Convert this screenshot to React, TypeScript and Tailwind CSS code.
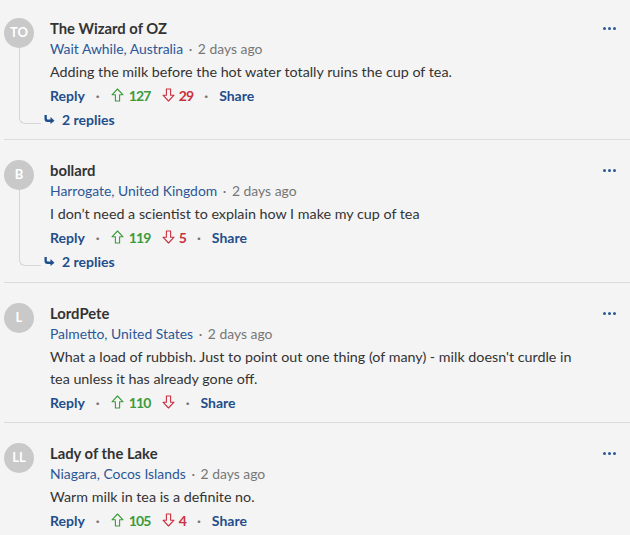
import React from "react";

type Comment = {
  initials: string;
  name: string;
  location: string;
  time: string;
  body: string;
  up: number;
  down?: number;
  replies?: number;
};

const comments: Comment[] = [
  {
    initials: "TO",
    name: "The Wizard of OZ",
    location: "Wait Awhile, Australia",
    time: "2 days ago",
    body: "Adding the milk before the hot water totally ruins the cup of tea.",
    up: 127,
    down: 29,
    replies: 2,
  },
  {
    initials: "B",
    name: "bollard",
    location: "Harrogate, United Kingdom",
    time: "2 days ago",
    body: "I don\u2019t need a scientist to explain how I make my cup of tea",
    up: 119,
    down: 5,
    replies: 2,
  },
  {
    initials: "L",
    name: "LordPete",
    location: "Palmetto, United States",
    time: "2 days ago",
    body: "What a load of rubbish. Just to point out one thing (of many) - milk doesn't curdle in tea unless it has already gone off.",
    up: 110,
  },
  {
    initials: "LL",
    name: "Lady of the Lake",
    location: "Niagara, Cocos Islands",
    time: "2 days ago",
    body: "Warm milk in tea is a definite no.",
    up: 105,
    down: 4,
  },
];

const UpArrow = () => (
  <svg width="13" height="14" viewBox="0 0 13 14" fill="none">
    <path
      d="M6.5 1 L12 6.8 H8.6 V13 H4.4 V6.8 H1 Z"
      stroke="#3b9b3b"
      strokeWidth="1.1"
      strokeLinejoin="round"
    />
  </svg>
);

const DownArrow = () => (
  <svg width="13" height="14" viewBox="0 0 13 14" fill="none">
    <path
      d="M6.5 13 L12 7.2 H8.6 V1 H4.4 V7.2 H1 Z"
      stroke="#c9303e"
      strokeWidth="1.1"
      strokeLinejoin="round"
    />
  </svg>
);

const ReplyArrow = () => (
  <svg width="11" height="9" viewBox="0 0 11 9" fill="#1f4e8c">
    <path d="M0.5 0 H2.8 V3.6 Q2.8 4.6 3.8 4.6 H6.5 V2 L10.5 5.8 L6.5 9 V6.9 H3.4 Q0.5 6.9 0.5 4 Z" />
  </svg>
);

const Dot = () => <span className="px-[11px] text-[14px] text-[#777]">·</span>;

const CommentItem = ({ c, first }: { c: Comment; first: boolean }) => (
  <div
    className={`flex border-b border-[#dcdcdc] ${first ? "pt-[18px]" : "pt-5"} ${
      c.replies ? (first ? "pb-[10px]" : "pb-[11px]") : "pb-2"
    }`}
  >
    <div className="flex w-[30px] shrink-0 flex-col">
      <div className="flex h-[30px] w-[30px] items-center justify-center rounded-full bg-[#c9c9c9] text-[13px] font-bold text-white">
        {c.initials}
      </div>
      {c.replies ? (
        <div className="mb-[5px] ml-[15px] w-[22px] flex-1 rounded-bl-[6px] border-b border-l border-[#d6d6d6]" />
      ) : null}
    </div>
    <div className="ml-4 min-w-0 flex-1">
      <div className="flex h-5 items-center justify-between">
        <span className="text-[14.8px] font-bold text-[#333]">{c.name}</span>
        <span className="mr-[14px] flex gap-[2px]">
          <span className="h-[3px] w-[3px] rounded-full bg-[#2b5797]" />
          <span className="h-[3px] w-[3px] rounded-full bg-[#2b5797]" />
          <span className="h-[3px] w-[3px] rounded-full bg-[#2b5797]" />
        </span>
      </div>
      <div className="mt-px text-[13.9px] leading-5">
        <span className="text-[#2b5797]">{c.location}</span>
        <span className="text-[#777]">
          {" "}
          <span className="px-[2px]">·</span> {c.time}
        </span>
      </div>
      <p className="mt-[2px] pr-[46px] text-[14.3px] leading-[22px] text-[#333]">{c.body}</p>
      <div className="flex h-6 items-center text-[14px] font-bold">
        <span className="text-[#1f4e8c]">Reply</span>
        <Dot />
        <span className="flex items-center gap-[5px] tracking-[-0.8px] text-[#3b9b3b]">
          <UpArrow />
          {c.up}
        </span>
        <span className="ml-[11px] flex items-center gap-[4px] tracking-[-0.8px] text-[#c9303e]">
          <DownArrow />
          {c.down ?? ""}
        </span>
        <Dot />
        <span className="text-[#1f4e8c]">Share</span>
      </div>
      {c.replies ? (
        <div className="-ml-[6px] mt-[2px] flex h-5 items-center gap-[7px] text-[14px] font-bold text-[#1f4e8c]">
          <ReplyArrow />
          {c.replies} replies
        </div>
      ) : null}
    </div>
  </div>
);

export default function App() {
  return (
    <div
      className="min-h-screen bg-[#f4f4f4] pl-1"
      style={{ fontFamily: "Lato, 'Liberation Sans', sans-serif" }}
    >
      {comments.map((c, i) => (
        <CommentItem key={i} c={c} first={i === 0} />
      ))}
    </div>
  );
}
